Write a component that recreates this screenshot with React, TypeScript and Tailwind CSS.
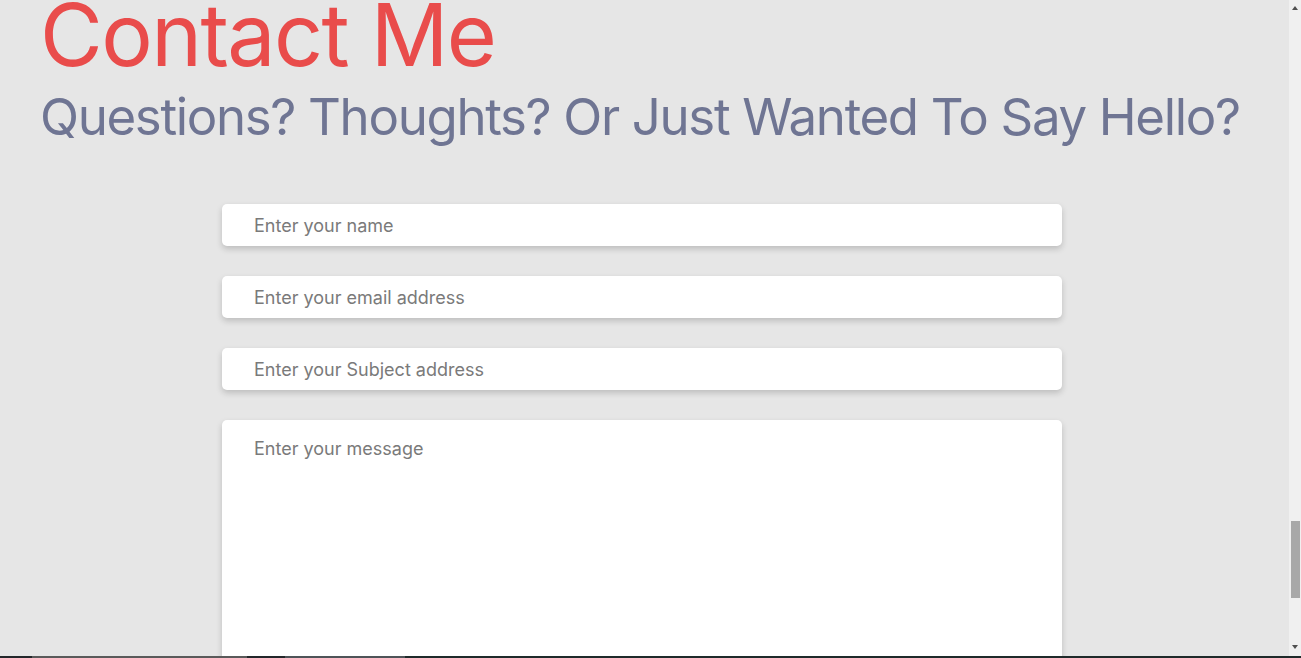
import React from 'react'

const fieldClass =
  'block w-full h-[42px] rounded-[5px] bg-white pl-8 pr-4 text-[18px] text-gray-700 placeholder-[#7a7a7a] shadow-[0_3px_6px_rgba(0,0,0,0.18)] outline-none'

export default function App() {
  return (
    <div className="relative flex h-[658px] w-full flex-col overflow-hidden bg-[#e6e6e6] font-['Inter',sans-serif]">
      <div className="flex min-h-0 flex-1">
        {/* Contact section */}
        <main className="min-w-0 flex-1 overflow-hidden pt-[3px]">
          <div className="pl-[40px]">
            <h1 className="text-[86px] font-normal leading-[64px] tracking-[-1.6px] text-[#e94c4b]">
              Contact Me
            </h1>
            <h2 className="mt-[20px] text-[51px] font-normal leading-[60px] tracking-[-1.35px] text-[#6f7593]">
              Questions? Thoughts? Or Just Wanted To Say Hello?
            </h2>
          </div>

          <form className="ml-[222px] mt-[57px] flex w-[840px] flex-col gap-[30px]">
            <input type="text" placeholder="Enter your name" className={fieldClass} />
            <input type="email" placeholder="Enter your email address" className={fieldClass} />
            <input type="text" placeholder="Enter your Subject address" className={fieldClass} />
            <textarea
              placeholder="Enter your message"
              className="block h-[300px] w-full resize-none rounded-[5px] bg-white pl-8 pr-4 pt-[15px] text-[18px] text-gray-700 placeholder-[#7a7a7a] shadow-[0_3px_6px_rgba(0,0,0,0.18)] outline-none"
            />
          </form>
        </main>

        {/* Page scrollbar */}
        <div className="relative w-[12px] shrink-0 bg-[#f0f0f0]">
          <div className="absolute left-[3px] top-[6px] h-0 w-0 border-x-[3px] border-b-[4px] border-x-transparent border-b-[#505050]" />
          <div className="absolute left-[2px] top-[521px] h-[77px] w-[9px] bg-[#a8a8a8]" />
          <div className="absolute left-[3px] top-[645px] h-0 w-0 border-x-[3px] border-t-[4px] border-x-transparent border-t-[#505050]" />
        </div>
      </div>

      {/* Start of footer */}
      <div className="flex h-[2px] shrink-0">
        <div className="w-[32px] bg-[#23272a]" />
        <div className="w-[215px] bg-[#5a5a5a]" />
        <div className="w-[38px] bg-[#23272a]" />
        <div className="w-[120px] bg-[#4f5458]" />
        <div className="flex-1 bg-[#1f2a2a]" />
      </div>
    </div>
  )
}
